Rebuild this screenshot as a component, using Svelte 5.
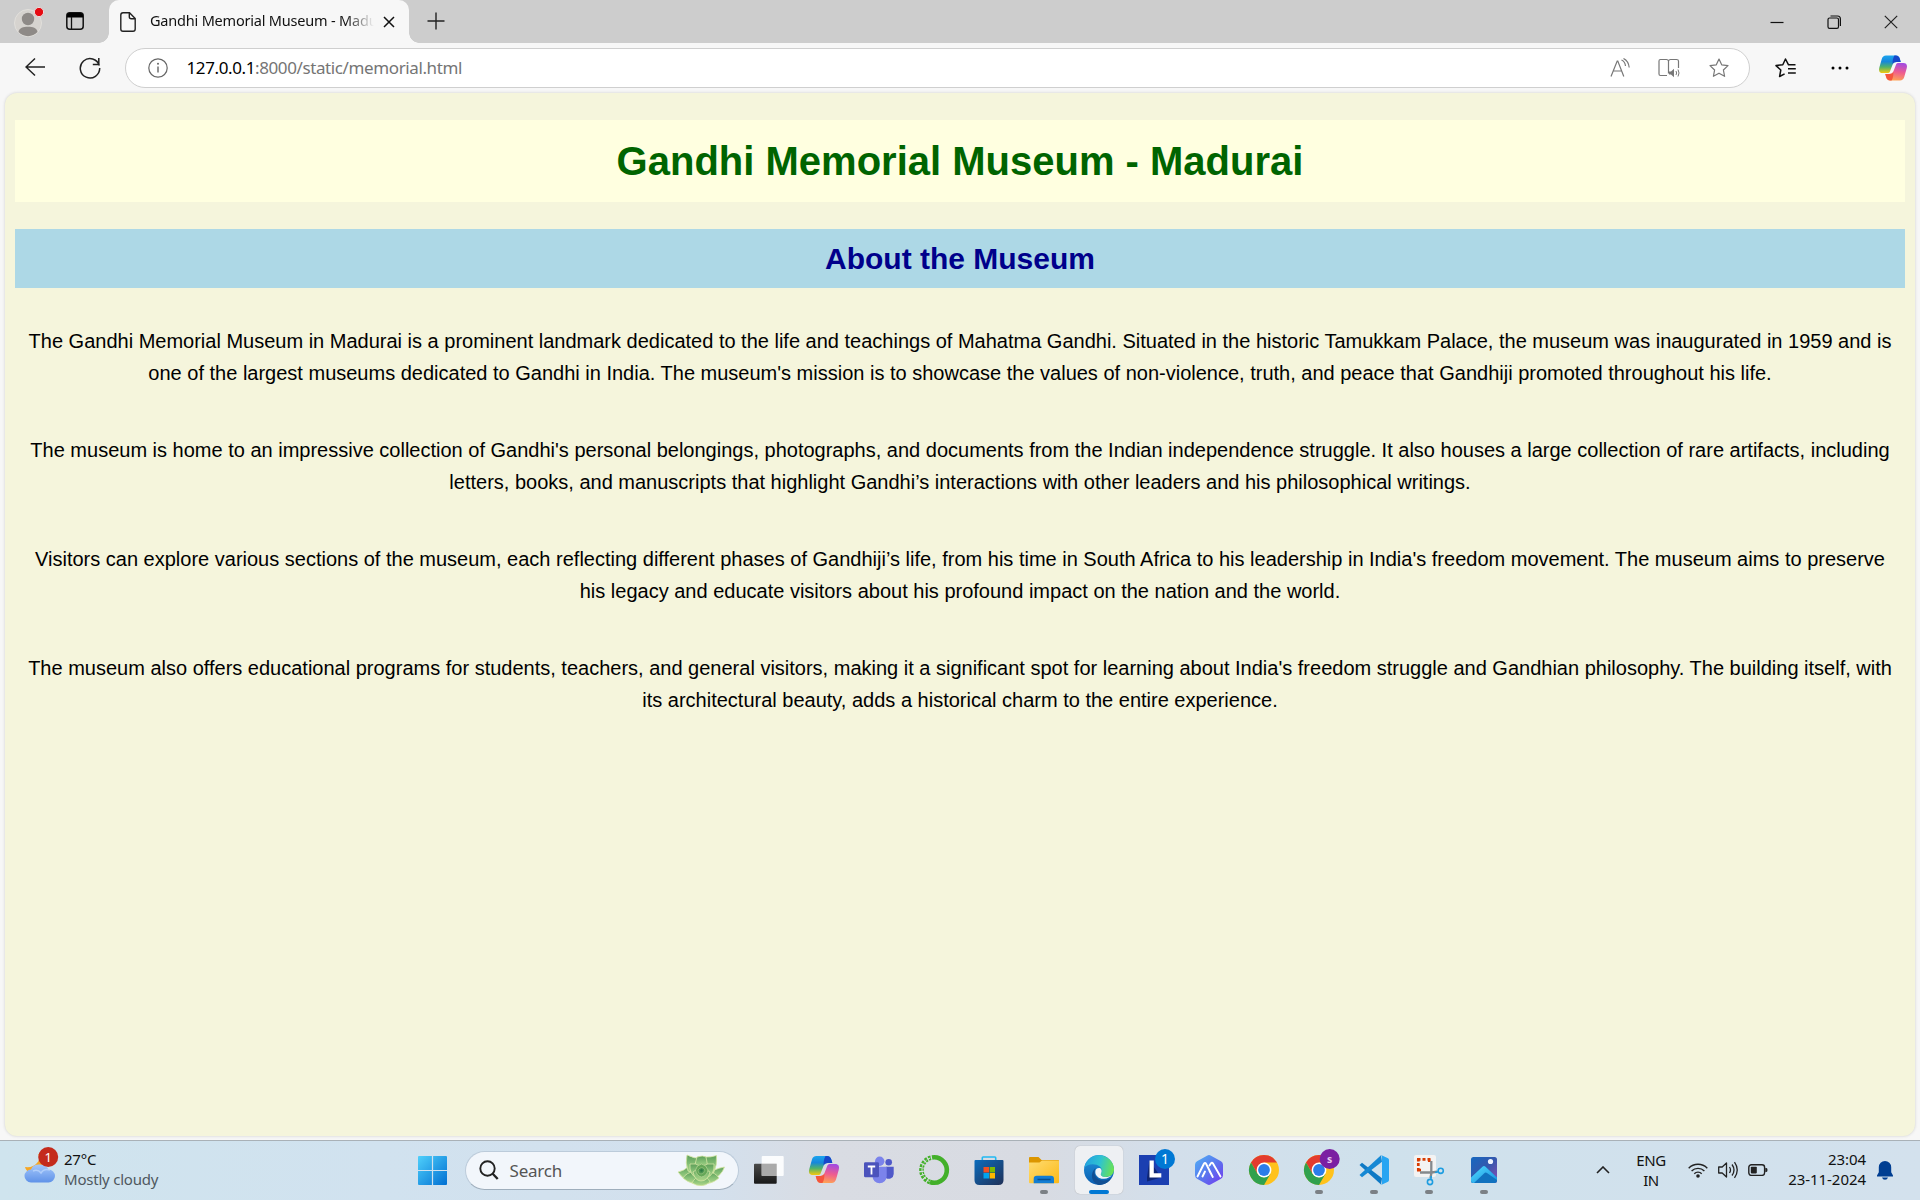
<script>
  const paragraphs = [
    [
      'The Gandhi Memorial Museum in Madurai is a prominent landmark dedicated to the life and teachings of Mahatma Gandhi. Situated in the historic Tamukkam Palace, the museum was inaugurated in 1959 and is',
      "one of the largest museums dedicated to Gandhi in India. The museum's mission is to showcase the values of non-violence, truth, and peace that Gandhiji promoted throughout his life."
    ],
    [
      "The museum is home to an impressive collection of Gandhi's personal belongings, photographs, and documents from the Indian independence struggle. It also houses a large collection of rare artifacts, including",
      'letters, books, and manuscripts that highlight Gandhi’s interactions with other leaders and his philosophical writings.'
    ],
    [
      "Visitors can explore various sections of the museum, each reflecting different phases of Gandhiji’s life, from his time in South Africa to his leadership in India's freedom movement. The museum aims to preserve",
      'his legacy and educate visitors about his profound impact on the nation and the world.'
    ],
    [
      "The museum also offers educational programs for students, teachers, and general visitors, making it a significant spot for learning about India's freedom struggle and Gandhian philosophy. The building itself, with",
      'its architectural beauty, adds a historical charm to the entire experience.'
    ]
  ];
  const apps = ['taskview', 'copilot', 'teams', 'anaconda', 'store', 'explorer', 'edge', 'l', 'hex', 'chrome', 'chrome2', 'vscode', 'snip', 'photos'];
  const running = ['explorer', 'chrome2', 'vscode', 'snip', 'photos'];
</script>

{#snippet copilot()}
  <path d="M16.500 10H27c2.600 0 3.700 1.300 4.500 4l.8 3h-4.500c-2.600 0-3.800 1.200-4.600 3.700L20.600 27.500Q20 29 18.500 29H13c-3.600 0-4.700-2.200-3.700-6l2.600-9.300C12.600 11.300 14 10 16.500 10z" fill="url(#cpA)" />
  <path d="M25.500 10H27c2.600 0 3.700 1.300 4.500 4l.8 3h-4.500c-2.200 0-3.400.8-4.200 2.700-.2-3.500.2-6.700 1.900-9.700z" fill="#1747c9" />
  <g transform="rotate(180 24 23.500)">
    <path d="M16.500 10H27c2.600 0 3.700 1.300 4.500 4l.8 3h-4.500c-2.600 0-3.800 1.200-4.600 3.700L20.600 27.500Q20 29 18.500 29H13c-3.600 0-4.700-2.200-3.700-6l2.600-9.300C12.600 11.300 14 10 16.500 10z" fill="url(#cpB)" />
    <path d="M25.500 10H27c2.600 0 3.700 1.300 4.500 4l.8 3h-4.500c-2.200 0-3.400.8-4.200 2.700-.2-3.500.2-6.700 1.900-9.700z" fill="#f4553d" />
  </g>
{/snippet}

{#snippet chromeLogo()}
  <circle cx="24" cy="24" r="15" fill="#ffc21c" />
  <path d="M11 16.500A15 15 0 0 1 37 16.500H24L17.500 27.700z" fill="#e33b2e" />
  <path d="M11 16.500 17.500 27.700 24 31.500l6.500-3.800L24 39A15 15 0 0 1 11 16.500z" fill="#30a14e" />
  <circle cx="24" cy="24" r="7.400" fill="#fff" />
  <circle cx="24" cy="24" r="5.900" fill="#2b7de9" />
{/snippet}

<svg class="defs" aria-hidden="true">
  <defs>
    <linearGradient id="cpA" x1="0" y1="0" x2="0" y2="1"><stop offset="0" stop-color="#1ca5ee" /><stop offset=".35" stop-color="#1687dc" /><stop offset=".65" stop-color="#4fb26b" /><stop offset="1" stop-color="#f6c90e" /></linearGradient>
    <linearGradient id="cpB" x1=".6" y1="0" x2=".4" y2="1"><stop offset="0" stop-color="#ffa553" /><stop offset=".5" stop-color="#ee5c90" /><stop offset="1" stop-color="#a34be0" /></linearGradient>
    <linearGradient id="win" x1="0" y1="0" x2="1" y2="1"><stop offset="0" stop-color="#4fd0fb" /><stop offset="1" stop-color="#006fd2" /></linearGradient>
    <linearGradient id="cloud" x1="0" y1="0" x2="0" y2="1"><stop offset="0" stop-color="#a5c8fb" /><stop offset="1" stop-color="#5f92e8" /></linearGradient>
    <linearGradient id="dark" x1="0" y1="0" x2="0" y2="1"><stop offset="0" stop-color="#4a4a4a" /><stop offset="1" stop-color="#191919" /></linearGradient>
    <linearGradient id="store" x1="0" y1="0" x2="1" y2="1"><stop offset="0" stop-color="#0b6cbd" /><stop offset="1" stop-color="#203057" /></linearGradient>
    <linearGradient id="folder" x1="0" y1="0" x2="1" y2="1"><stop offset="0" stop-color="#ffdc72" /><stop offset="1" stop-color="#fbb916" /></linearGradient>
    <linearGradient id="edgeTop" x1="0" y1=".4" x2="1" y2=".6"><stop offset="0" stop-color="#22a2e0" /><stop offset=".5" stop-color="#2fc3d0" /><stop offset="1" stop-color="#6be44f" /></linearGradient>
    <linearGradient id="edgeLow" x1="0" y1="0" x2="0" y2="1"><stop offset="0" stop-color="#2296dd" /><stop offset="1" stop-color="#0a5db0" /></linearGradient>
    <linearGradient id="hexg" x1="0" y1="0" x2="1" y2="1"><stop offset="0" stop-color="#4fb1f5" /><stop offset=".5" stop-color="#5a78ee" /><stop offset="1" stop-color="#7436ef" /></linearGradient>
    <linearGradient id="photo" x1="0" y1="0" x2="1" y2="1"><stop offset="0" stop-color="#1668c0" /><stop offset=".5" stop-color="#3558ad" /><stop offset="1" stop-color="#8d4bb5" /></linearGradient>
    <linearGradient id="hill" x1="0" y1="0" x2="1" y2="1"><stop offset="0" stop-color="#52dcff" /><stop offset="1" stop-color="#168ddd" /></linearGradient>
    <linearGradient id="leaf" x1="0" y1="0" x2="0" y2="1"><stop offset="0" stop-color="#5b9d58" /><stop offset=".5" stop-color="#86c076" /><stop offset="1" stop-color="#b2d88c" /></linearGradient>
  </defs>
</svg>

<div class="screen">
  <header class="tabstrip">
    <svg class="profile" viewBox="0 0 32 36"><circle cx="15" cy="19" r="13.500" fill="#d6d3cf" stroke="#e2e0dc" /><circle cx="15" cy="15" r="6.200" fill="#8e8a87" /><path d="M5.500 28c1-4.500 4.500-5.300 9.500-5.300s8.500.8 9.500 5.300a13 13 0 0 1-19 0z" fill="#8e8a87" /><circle cx="26" cy="8" r="4.600" fill="#e60b12" stroke="#e9dcdc" /></svg>
    <svg class="workspaces" viewBox="0 0 18 18"><rect x=".8" y=".8" width="16.400" height="16.400" rx="3" fill="none" stroke="#111" stroke-width="1.500" /><path d="M1 5.500V3.500Q1 1 3.500 1h11Q17 1 17 3.500v2z" fill="#000" /><path d="M5.500 5v12" stroke="#111" stroke-width="1.300" /></svg>
    <div class="tab">
      <svg class="doc" viewBox="0 0 16 20"><path d="M3 .8h6.500L15.200 6.500V17q0 2.200-2.200 2.200H3Q.8 19.200.8 17V3Q.8.800 3 .8zM9.300 1v3.800q0 2 2 2h3.700" fill="none" stroke="#222" stroke-width="1.400" /></svg>
      <span class="tabtitle">Gandhi Memorial Museum - Madurai</span>
      <svg class="close" viewBox="0 0 12 12"><path d="M1 1l10 10M11 1 1 11" stroke="#111" stroke-width="1.500" /></svg>
    </div>
    <svg class="plus" viewBox="0 0 18 18"><path d="M9 .5v17M.5 9h17" stroke="#222" stroke-width="1.400" /></svg>
    <div class="winctl">
      <svg viewBox="0 0 14 14"><path d="M.5 7.500h13" stroke="#111" stroke-width="1.200" /></svg>
      <svg viewBox="0 0 14 14"><rect x="1" y="3" width="10.500" height="10.300" rx="1.600" fill="none" stroke="#111" stroke-width="1.200" /><path d="M3.500 1h7Q13.400 1 13.400 4v7" fill="none" stroke="#111" stroke-width="1.200" /></svg>
      <svg viewBox="0 0 14 14"><path d="M.8.8l12.400 12.400M13.200.8.8 13.200" stroke="#222" stroke-width="1.200" /></svg>
    </div>
  </header>

  <nav class="toolbar">
    <svg class="back" viewBox="0 0 20 20"><path d="M10 1.500 1 10l9 8.500M1 10h19" fill="none" stroke="#222" stroke-width="1.500" /></svg>
    <svg class="reload" viewBox="0 0 22 22"><path d="M20.300 8.500A9.700 9.700 0 1 0 20.700 11M19.800 1v6.500h-6" fill="none" stroke="#222" stroke-width="1.500" /></svg>
    <div class="address">
      <svg class="info" viewBox="0 0 20 20"><circle cx="10" cy="10" r="9.200" fill="none" stroke="#666" stroke-width="1.200" /><path d="M10 8.500v6" stroke="#666" stroke-width="1.400" /><circle cx="10" cy="5.800" r="1" fill="#666" /></svg>
      <span class="url"><b>127.0.0.1</b>:8000/static/memorial.html</span>
      <svg class="read" viewBox="0 0 20 20"><path d="M1 18.500 7.200 3h.6l6 15.500M3.400 13h8.400M11.500 2q3.500 1.500 4 6M13.500.5q5 2.500 5.700 9" fill="none" stroke="#777" stroke-width="1.200" /></svg>
      <svg class="book" viewBox="0 0 22 20"><path d="M10.500 3v12.500M10.500 3Q10 1.500 8.500 1.500H2.500Q1 1.500 1 3v13q0 1.500 1.500 1.500h6.500M10.500 3Q11 1.500 12.500 1.500h6Q20.500 1.500 20.500 3v7" fill="none" stroke="#777" stroke-width="1.200" /><path d="M11 13.500h2l3-2.700v8.400l-3-2.700h-2z" fill="#777" /><path d="M18 13q1.200 2 0 4M20 11.500q2 3.500 0 7" fill="none" stroke="#777" /></svg>
      <svg class="star" viewBox="0 0 20 20"><path d="m10 1 2.700 5.800 6.300.8-4.600 4.400 1.200 6.300L10 15.200l-5.600 3.100L5.600 12 1 7.600l6.300-.8z" fill="none" stroke="#777" stroke-width="1.200" stroke-linejoin="round" /></svg>
    </div>
    <svg class="favs" viewBox="0 0 22 20"><path d="M20.500 6.800h-7L10.500 1 7.800 6.800 1 7.600l4.800 4.400-1.200 6.500 5-2.700M13 10.700h7.800M13 15h7.800" fill="none" stroke="#111" stroke-width="1.500" stroke-linejoin="round" /></svg>
    <svg class="more" viewBox="0 0 18 4"><circle cx="2" cy="2" r="1.500" /><circle cx="9" cy="2" r="1.500" /><circle cx="16" cy="2" r="1.500" /></svg>
    <svg class="sidepilot" viewBox="9 9.500 30 28">{@render copilot()}</svg>
  </nav>

  <div class="viewport">
    <main>
      <h1>Gandhi Memorial Museum - Madurai</h1>
      <h2>About the Museum</h2>
      {#each paragraphs as lines}
        <p>{#each lines as line}<span>{line}</span>{/each}</p>
      {/each}
    </main>
  </div>

  <footer class="taskbar">
    <div class="weather">
      <svg viewBox="0 0 36 38"><path d="M14 7q3 5-1 9-4 5-12 4 1 5 7 6l12-6V9z" fill="#f6a623" /><path d="M7 35.500a6.500 6.500 0 0 1 0-13Q9 17 16 17.500q6 0 8.500 5a6.500 6.500 0 0 1 0 13z" fill="url(#cloud)" /><path d="M9 24q5-2 8 2 3-5 9-3" fill="none" stroke="#c0dafd" stroke-width="1.500" opacity=".7" /><circle cx="24.200" cy="10" r="10" fill="#c42b1c" /><text x="24.200" y="14.500" fill="#fff" font-size="13" text-anchor="middle">1</text></svg>
      <div class="wtext"><span>27°C</span><span class="dim">Mostly cloudy</span></div>
    </div>
    <svg class="start" viewBox="0 0 29 29"><path d="M0 1q0-1 1-1h12.900v13.900H0zM15.100 0H28q1 0 1 1v12.900H15.100zM0 15.100h13.900V29H1q-1 0-1-1zM15.100 15.100H29V28q0 1-1 1H15.100z" fill="url(#win)" /></svg>
    <div class="search">
      <svg class="lens" viewBox="0 0 20 20"><circle cx="8.500" cy="8.500" r="7.200" fill="none" stroke="#222" stroke-width="1.900" /><path d="m13.500 13.500 5.200 5.500" stroke="#222" stroke-width="2.300" /></svg>
      <span>Search</span>
      <svg class="plant" viewBox="0 0 48 32">
        <g fill="url(#leaf)" stroke="#d6e6a4" stroke-width=".8">
          <path d="M1 18q6-1 11-6l8 8-9 7Q5 24 1 18zM47.500 13q-6 1-10 3l-9 7 6 3q10-4 13-13z" />
          <path d="M10 1q8 4 14 3l-4 16-9-3Q8 9 10 1zM39.500 1.500q-6 2-12 1.500l-1 14 10 2q4-8 3-17.500z" />
          <path d="M20 3q6-2 9 0l2 11H17z" />
          <path d="M6 24q4-6 11-6l7 10q-9 4-18-4zM42 24q-4-6-11-6l-7 10q9 4 18-4z" />
          <path d="M15 29q3-6 9-7 7 1 9 6-8 7-18 1z" />
          <path d="M13 10q6-1 10 2l-3 12q-8-3-7-14zM37 10q-7-1-11 2l3 12q9-3 8-14z" />
          <path d="M16 18q8-7 17 0-2 9-9 9-6 0-8-9z" />
        </g>
        <path d="M18.500 16q1-5 6-6 5 1 6.500 6-1 6-6.500 7-5-1-6-7z" fill="#65a758" stroke="#bcd99a" stroke-width=".7" /><path d="M21 16q4-5 7 0-1 4-4 4t-3-4z" fill="#4b9450" stroke="#a5cb85" stroke-width=".6" /><circle cx="24.500" cy="16.500" r="1.200" fill="#2d7a44" />
      </svg>
    </div>
    <div class="apps">
      {#each apps as app}
        <svg class="app" class:active={app === 'edge'} viewBox="0 0 48 48">
          {#if app === 'taskview'}
            <rect x="9" y="17.700" width="22.700" height="20" rx="1" fill="url(#dark)" /><rect x="16.700" y="10" width="22" height="20" rx="1" fill="#fff" opacity=".9" /><rect x="16.700" y="17.700" width="15" height="12.300" fill="#aaa" />
          {:else if app === 'copilot'}
            {@render copilot()}
          {:else if app === 'teams'}
            <circle cx="33.700" cy="16.300" r="3.300" fill="#5059c9" /><path d="M31 20.700h7.700V28a5 5 0 0 1-7.700 4z" fill="#5059c9" /><circle cx="24.700" cy="15.300" r="4.700" fill="#7b83eb" /><path d="M17.500 20.700h14.200v9.500a7 7 0 0 1-14.200 0z" fill="#7b83eb" /><rect x="9" y="16.300" width="15" height="15" rx="1.400" fill="#4b53bc" /><path d="M12.800 20.500h7.400M16.500 20.500v8" stroke="#fff" stroke-width="1.800" />
          {:else if app === 'anaconda'}
            <path d="M24 11.300a12.700 12.700 0 1 1-4 24.700" fill="none" stroke="#43b02a" stroke-width="4.600" /><path d="M20 36A12.700 12.700 0 0 1 24 11.300" fill="none" stroke="#43b02a" stroke-width="4.600" stroke-dasharray="2.500 1.200" /><path d="M19.500 35.500A12.700 12.700 0 0 1 22 11.500" fill="none" stroke="#dde2e3" stroke-width="1" stroke-dasharray="3 1.500" />
          {:else if app === 'store'}
            <path d="M17.300 15v-3.200q0-.8.800-.8h11.800q.8 0 .8.800V15" fill="none" stroke="#21b9f2" stroke-width="1.600" /><path d="M9.500 15q0-1 1-1h27q1 0 1 1v19q0 5-5 5h-19q-5 0-5-5z" fill="url(#store)" /><path d="M18.500 21H24v5.400h-5.500z" fill="#f25022" /><path d="M24.700 21H30v5.400h-5.300z" fill="#7fba00" /><path d="M18.500 27.100H24v5.300h-5.500z" fill="#00a4ef" /><path d="M24.700 27.100H30v5.300h-5.300z" fill="#ffb900" />
          {:else if app === 'explorer'}
            <path d="M9 12q0-1 1-1h8.500l3 3H38q1 0 1 1v3H9z" fill="#dc9600" /><path d="M9 16.500h10.500l2.500-2H38q1 0 1 1v20.800q0 1-1 1H10q-1 0-1-1z" fill="url(#folder)" /><path d="M13.700 37.300v-4.600q0-3 3-3H31q3 0 3 3v4.600z" fill="#127dd3" /><path d="M17.500 33.500h13" stroke="#064f91" stroke-width="1.300" />
          {:else if app === 'edge'}
            <circle cx="24" cy="24" r="15" fill="url(#edgeLow)" /><path d="M9.200 22A15 15 0 0 1 39 23c.2 5-3.500 8-8.500 8-4 0-5.500-2-4.300-4 1.300-2.500.5-5-1.500-6.500-4.500-4-13-2.500-15.500 1.500z" fill="url(#edgeTop)" /><path d="M20.500 22c-3.500 7 2.500 13.500 9 12.500 3-.4 5.500-1.500 7-2.700A15 15 0 0 1 25 39c-8-1-11-11-4.500-17z" fill="#114f93" /><path d="M26.200 27c1-2.300.2-4-.9-4.800-3-.7-5 1-5 3.800 0 4 4 7.200 8.700 6.800 3.500-.3 6.500-2 7.800-3.600-1.700 1.200-3.800 1.800-6.300 1.800-4 0-5.500-2-4.300-4z" fill="#f0f4f8" />
            <rect x="14" y="44" width="20" height="4" rx="2" fill="#0078d4" />
          {:else if app === 'l'}
            <rect x="9" y="9" width="30" height="30" fill="#1b3fb1" /><path d="m19.500 14.500-2.500 17v4l14-4z" fill="#0f2674" /><path d="M19.500 14.500h4.300v12.700h7.500v4.300H19.500z" fill="#fff" /><circle cx="35" cy="13" r="10" fill="#0078d4" /><text x="35" y="18" fill="#fff" font-size="14" text-anchor="middle">1</text>
          {:else if app === 'hex'}
            <path d="M22 9.700q2-1.200 4 0l10 5.600q2 1.200 2 3.400v10.600q0 2.200-2 3.400l-10 5.600q-2 1.200-4 0l-10-5.600q-2-1.200-2-3.400V18.700q0-2.200 2-3.400z" fill="url(#hexg)" /><path d="m12.500 30.500 6.300-12.500q1.200-2 2.400 0l6.300 12.500M17.500 30.500l2.500-5M24.500 19.500l1.300-2q1.200-1.500 2.200 0l7.500 13M24.500 25l3.300 6" fill="none" stroke="#fff" stroke-width="1.900" stroke-linecap="round" />
          {:else if app === 'chrome'}
            {@render chromeLogo()}
          {:else if app === 'chrome2'}
            {@render chromeLogo()}
            <circle cx="34.700" cy="13" r="10" fill="#7b1fa2" /><text x="34.700" y="16.500" fill="#e6c8ee" font-size="10.500" font-weight="700" text-anchor="middle">s</text>
          {:else if app === 'vscode'}
            <path d="m9.500 19 2.500-2.200 20 15.500L31 38.500z" fill="#0d79c5" /><path d="m9.500 29 2.500 2.300 20-15.500L31 9.300z" fill="#1588d4" /><path d="m31 9 7 3.200q1 .5 1 1.800v20q0 1.300-1 1.800L31 39q1-1 1-2V11q0-1-1-2z" fill="#27a5f2" />
          {:else if app === 'snip'}
            <rect x="9" y="9" width="22" height="22" rx="2" fill="#f3f3f3" /><path d="M13.300 25v-3M13.300 20v-3M12 13.300h3.500M17.500 13.300h3M22.500 13.300h3M13.300 13v2.500M24.300 13.300V16M12 24.200h4" fill="none" stroke="#d83b01" stroke-width="2.700" /><path d="M26.300 15v12.500L25.500 32M15 26.500h12l5-.8" fill="none" stroke="#84898d" stroke-width="2.300" /><circle cx="35.700" cy="24.800" r="2.600" fill="none" stroke="#1e9de0" stroke-width="1.600" /><circle cx="25" cy="36" r="2.600" fill="none" stroke="#1e9de0" stroke-width="1.600" /><path d="M30 26.500l3.200-.8M26.300 30l-.5 3.500" stroke="#1e9de0" stroke-width="1.600" />
          {:else}
            <rect x="11" y="11" width="26" height="26" rx="2.500" fill="url(#photo)" /><path d="M11 32 22.500 20.700q1.500-1.500 3 0L37 32v2.500q0 2.500-2.500 2.500h-21Q11 37 11 34.500z" fill="#1172bf" /><path d="M11 31.500 22.500 20.700q1.500-1.500 3 0L37 31.500V34L27 27q-1.500-1-3 .5L14 37h-.5Q11 37 11 34.500z" fill="url(#hill)" /><circle cx="30.500" cy="15.500" r="2.600" fill="#eef3ff" />
          {/if}
          {#if running.includes(app)}<rect x="20" y="44" width="8" height="4" rx="2" fill="#7b8085" />{/if}
        </svg>
      {/each}
    </div>
    <div class="tray">
      <svg class="chev" viewBox="0 0 14 8"><path d="m1 7 6-6 6 6" fill="none" stroke="#222" stroke-width="1.600" /></svg>
      <div class="lang"><span>ENG</span><span>IN</span></div>
      <svg class="wifi" viewBox="0 0 20 16"><path d="M.7 6.200a13 13 0 0 1 18.600 0M3.600 9a9 9 0 0 1 12.800 0M6.300 11.700a5.200 5.200 0 0 1 7.400 0" fill="none" stroke="#222" stroke-width="1.400" /><circle cx="10" cy="14" r="1.800" fill="#222" /></svg>
      <svg class="vol" viewBox="0 0 20 18"><path d="M.7 6h3.500L8.500 2v14l-4.300-4H.7zM11.500 6q2 3 0 6M14 3.500q4 5.500 0 11M16.500 1.200q5.500 7.800 0 15.600" fill="none" stroke="#222" stroke-width="1.300" stroke-linejoin="round" /></svg>
      <svg class="batt" viewBox="0 0 20 12"><rect x=".8" y=".8" width="15.800" height="10.600" rx="2.600" fill="none" stroke="#222" stroke-width="1.400" /><rect x="2.800" y="2.800" width="6" height="6.600" rx=".8" fill="#222" /><path d="M17.300 4h1q1.200 0 1.200 2t-1.200 2h-1z" fill="#222" /></svg>
      <div class="clock"><span>23:04</span><span>23-11-2024</span></div>
      <svg class="bell" viewBox="0 0 16 19"><path d="M8 0a6.200 6.200 0 0 1 6.200 6.200v5L16 14.500v1H0v-1l1.800-3.300v-5A6.200 6.200 0 0 1 8 0zM5 16.500h6q-.7 2.300-3 2.300t-3-2.300z" fill="#003e92" /></svg>
    </div>
  </footer>
</div>

<style>
  :global(body) { margin: 0; overflow: hidden; }
  svg { display: block; flex: none; }
  .defs { position: absolute; width: 0; height: 0; }
  .screen { width: 1920px; height: 1200px; display: flex; flex-direction: column; background: #f7f7f7; font-family: "Noto Sans", "Open Sans", sans-serif; color: #111; overflow: hidden; }

  .tabstrip { height: 43px; flex: none; display: flex; align-items: center; background: #cdcdcd; }
  .profile { width: 32px; height: 36px; margin: 0 0 0 13px; }
  .workspaces { width: 18px; height: 18px; margin: 0 0 1px 21px; }
  .tab { position: relative; box-sizing: border-box; width: 300px; height: 43px; margin-left: 25px; padding: 0 14px 0 11px; display: flex; align-items: center; background: #f7f7f7; border-radius: 10px 10px 0 0; }
  .tab::before, .tab::after { content: ""; position: absolute; bottom: 0; width: 10px; height: 10px; }
  .tab::before { left: -10px; background: radial-gradient(circle at 0 0, #cdcdcd 9.500px, #f7f7f7 10px); }
  .tab::after { right: -10px; background: radial-gradient(circle at 100% 0, #cdcdcd 9.500px, #f7f7f7 10px); }
  .doc { width: 16px; height: 20px; }
  .tabtitle { width: 224px; margin: 0 0 3px 14px; overflow: hidden; white-space: nowrap; font-size: 14.500px; letter-spacing: -.2px; line-height: 22px; mask-image: linear-gradient(90deg, #000 195px, transparent 224px); }
  .close { width: 12px; height: 12px; margin-left: 9px; }
  .plus { width: 18px; height: 18px; margin: 0 0 2px 18px; }
  .winctl { margin-left: auto; padding-right: 22px; display: flex; gap: 43px; }
  .winctl svg { width: 14px; height: 14px; }

  .toolbar { box-sizing: border-box; height: 50px; flex: none; display: flex; align-items: center; padding-bottom: 1px; }
  .back { width: 20px; height: 20px; margin: 0 0 1px 25px; }
  .reload { width: 22px; height: 22px; margin-left: 34px; }
  .address { box-sizing: border-box; width: 1625px; height: 40px; margin-left: 24px; padding: 0 20px 0 21.500px; display: flex; align-items: center; background: #fff; border: 1px solid #cfcfcf; border-radius: 20px; }
  .info { width: 20px; height: 20px; }
  .url { margin: 0 0 1px 19px; font-size: 17px; letter-spacing: -.39px; white-space: nowrap; color: #757575; }
  .url b { font-weight: 400; color: #000; }
  .read { width: 20px; height: 20px; margin-left: auto; }
  .book { width: 22px; height: 20px; margin-left: 28.500px; }
  .star { width: 20px; height: 20px; margin-left: 29px; }
  .favs { width: 22px; height: 20px; margin-left: 24.500px; }
  .more { width: 18px; height: 4px; margin-left: 34.500px; }
  .sidepilot { width: 28px; height: 26px; margin-left: 30px; }

  .viewport { height: 1047px; flex: none; padding: 0 5px; }
  main { box-sizing: border-box; height: 1043px; padding: 27px 10px 0; background: #f5f5dc; border-radius: 12px; box-shadow: 0 0 3px #ccc; font-family: "Liberation Sans", Arial, sans-serif; color: #000; text-align: center; overflow: hidden; }
  h1 { height: 82px; line-height: 82px; margin: 0 0 27px; background: #ffffe0; color: #006400; font-size: 40px; }
  h2 { height: 59px; line-height: 59px; margin: 0 0 37px; background: #add8e6; color: #00008b; font-size: 30px; }
  p { margin: 0 0 45px; font-size: 20px; line-height: 32px; }
  p span { display: block; white-space: nowrap; }

  .taskbar { box-sizing: border-box; height: 60px; flex: none; display: flex; align-items: center; padding-bottom: 1px; border-top: 1px solid #a9b1b7; background: linear-gradient(90deg, #cfe4ee 0, #d1e2ef 20%, #d3e0ed 37%, #d9dce3 43%, #d8dbe2 54%, #d3dfeb 61%, #cfe1ec 72%, #d3e1ed 100%); }
  .weather { width: 393px; padding-left: 25px; display: flex; align-items: center; }
  .weather svg { width: 36px; height: 38px; margin: -8px 1px 0 -1px; }
  .wtext { display: flex; flex-direction: column; margin-left: 3px; font-size: 15px; line-height: 20px; letter-spacing: -.22px; margin-top: -3px; }
  .dim { color: #4f585e; }
  .start { width: 29px; height: 29px; }
  .search { box-sizing: border-box; width: 274px; height: 39px; margin-left: 17.500px; padding: 0 13px; display: flex; align-items: center; background: #f2f6fb; border: 1px solid #bccbda; border-bottom-color: #9faebc; border-radius: 20px; font-size: 17px; letter-spacing: -.2px; color: #555; }
  .lens { width: 20px; height: 20px; margin-right: 11px; }
  .plant { width: 48px; height: 32px; margin-left: auto; }
  .apps { display: flex; gap: 7px; margin-left: 6px; }
  .app { width: 48px; height: 48px; border-radius: 5px; }
  .active { background: #eef0f3; box-shadow: 0 0 1px #999; }
  .tray { margin-left: auto; display: flex; align-items: center; font-size: 15px; line-height: 20px; }
  .chev { width: 14px; height: 8px; }
  .lang { width: 34px; margin: 0 0 1px 24px; display: flex; flex-direction: column; align-items: center; letter-spacing: -.4px; }
  .wifi { width: 20px; height: 16px; margin-left: 20px; }
  .vol { width: 20px; height: 18px; margin-left: 10px; }
  .batt { width: 20px; height: 12px; margin-left: 10px; }
  .clock { width: 98px; margin-bottom: 2px; display: flex; flex-direction: column; align-items: flex-end; letter-spacing: -.05px; }
  .bell { width: 16px; height: 19px; margin: 0 27px 0 11px; }
</style>
